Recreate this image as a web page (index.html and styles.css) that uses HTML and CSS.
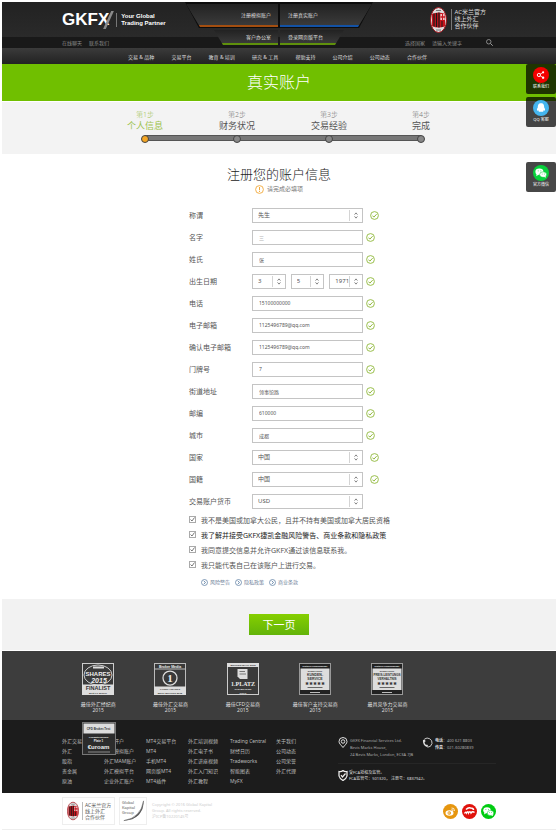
FILE: index.html
```html
<!DOCTYPE html>
<html lang="zh-CN">
<head>
    <meta charset="UTF-8">
    <meta name="viewport" content="width=device-width, initial-scale=1.0">
    <title>GKFX 真实账户</title>
    <link rel="stylesheet" href="styles.css">
</head>
<body>
    <svg width="0" height="0" class="defs" aria-hidden="true">
        <symbol id="ok" viewBox="0 0 18 18">
            <circle cx="9" cy="9" r="7.8" fill="none" stroke="#8fb83a" stroke-width="1.8"/>
            <path d="M4.8 9.2l3 3 5.4-5.8" fill="none" stroke="#8fb83a" stroke-width="2"/>
        </symbol>
        <symbol id="updown" viewBox="0 0 8 12">
            <path d="M1.5 4.5L4 1.5l2.5 3M1.5 7.5l2.5 3 2.5-3" fill="none" stroke="#777" stroke-width="1.5"/>
        </symbol>
        <symbol id="play" viewBox="0 0 14 14">
            <circle cx="7" cy="7" r="6" fill="none" stroke="#5d7fa3" stroke-width="1.5"/>
            <path d="M5.5 3.8L9 7l-3.5 3.2" fill="none" stroke="#5d7fa3" stroke-width="1.8"/>
        </symbol>
        <symbol id="milan" viewBox="0 0 34 52">
            <ellipse cx="17" cy="26" rx="16" ry="25" fill="#ddd" stroke="#a5141c" stroke-width="2"/>
            <path d="M4 14q13-6 26 0v24q-13 6-26 0z" fill="#c8141d"/>
            <path d="M8 13v26M13 12v28M18 11v30" stroke="#1a1a1a" stroke-width="2.4"/>
            <path d="M21 14h8v12h-8z" fill="#fff"/>
            <path d="M25 13v14M21 20h9" stroke="#c8141d" stroke-width="3"/>
            <path d="M21 27h8v12l-8 1z" fill="#c8141d"/>
            <path d="M24 28v12" stroke="#1a1a1a" stroke-width="2"/>
            <path d="M12 7h10M12 46h10" stroke="#777" stroke-width="2"/>
        </symbol>
        <symbol id="wechat" viewBox="0 0 30 30">
            <ellipse cx="12" cy="12.500" rx="7.500" ry="6" fill="#fff"/>
            <path d="M7 16l-1 5 5-3z" fill="#fff"/>
            <ellipse cx="19" cy="18" rx="6.500" ry="5.200" fill="#fff" stroke="#0c3" stroke-width="1"/>
            <path d="M20 22l4 2-.5-4z" fill="#fff"/>
            <path d="M9 11h1.500M14 11h1.500M16.500 17h1.300M20.500 17h1.300" stroke="#0c3" stroke-width="1.500"/>
        </symbol>
    </svg>

    <header class="header">
        <div class="topbar">
            <div class="container topbar-inner">
                <a class="logo" href="#">
                    <span class="logo-name">GKFX</span>
                    <svg class="logo-slash" viewBox="0 0 12 20"><path d="M0 20L9 0h3L3 20z" fill="#8a8a8a"/></svg>
                    <span class="logo-tag">Your Global<br>Trading Partner</span>
                </a>
                <a class="partner" href="#">
                    <svg class="crest"><use href="#milan"/></svg>
                    <span class="partner-text">AC米兰官方<br>线上外汇<br>合作伙伴</span>
                </a>
            </div>
        </div>
        <div class="utility">
            <div class="container utility-inner">
                <a href="#">在线聊天</a>
                <a href="#">联系我们</a>
                <a class="country" href="#">选择国家</a>
                <form class="search">
                    <input type="text" placeholder="请输入关键字" aria-label="请输入关键字">
                    <button type="button" aria-label="搜索">
                        <svg viewBox="0 0 14 14"><circle cx="5.500" cy="5.500" r="4.500" fill="none" stroke="#aaa" stroke-width="1.500"/><path d="M9 9l4.500 4.500" stroke="#aaa" stroke-width="1.800"/></svg>
                    </button>
                </form>
            </div>
        </div>
        <div class="tabs">
            <div class="tabs-main">
                <a class="tab tab-demo" href="#">注册模拟账户</a>
                <a class="tab tab-live" href="#">注册真实账户</a>
            </div>
            <div class="tabs-sub">
                <a class="tab tab-office" href="#">客户办公室</a>
                <a class="tab tab-web" href="#">登录网页版平台</a>
            </div>
        </div>
        <nav class="nav">
            <div class="container nav-inner">
                <a href="#">交易 &amp; 品种</a>
                <a href="#">交易平台</a>
                <a href="#">教育 &amp; 培训</a>
                <a href="#">研究 &amp; 工具</a>
                <a href="#">帮助支持</a>
                <a href="#">公司介绍</a>
                <a href="#">公司动态</a>
                <a href="#">合作伙伴</a>
            </div>
        </nav>
    </header>

    <h1 class="banner">真实账户</h1>

    <section class="progress">
        <div class="container">
            <ol class="steps">
                <li class="active"><small>第1步</small><span>个人信息</span><i></i></li>
                <li><small>第2步</small><span>财务状况</span><i></i></li>
                <li><small>第3步</small><span>交易经验</span><i></i></li>
                <li><small>第4步</small><span>完成</span><i></i></li>
            </ol>
        </div>
    </section>

    <form class="account">
        <div class="container">
            <h2>注册您的账户信息</h2>
            <p class="hint">
                <svg viewBox="0 0 18 18"><circle cx="9" cy="9" r="7.800" fill="none" stroke="#f2a93b" stroke-width="1.800"/><path d="M9 4v6.500M9 12v2" stroke="#f2a93b" stroke-width="2"/></svg>
                请完成必填项
            </p>
            <div class="fields">
                <div class="row row-select">
                    <label for="title">称谓</label>
                    <div class="select"><select id="title"><option>先生</option></select><svg><use href="#updown"/></svg></div>
                    <svg class="ok"><use href="#ok"/></svg>
                </div>
                <div class="row">
                    <label for="first">名字</label>
                    <input type="text" id="first" value="三">
                    <svg class="ok"><use href="#ok"/></svg>
                </div>
                <div class="row">
                    <label for="last">姓氏</label>
                    <input type="text" id="last" value="张">
                    <svg class="ok"><use href="#ok"/></svg>
                </div>
                <div class="row">
                    <label for="day">出生日期</label>
                    <div class="birth">
                        <div class="select"><select id="day"><option>3</option></select><svg><use href="#updown"/></svg></div>
                        <div class="select"><select aria-label="月"><option>5</option></select><svg><use href="#updown"/></svg></div>
                        <div class="select"><select aria-label="年"><option>1971</option></select><svg><use href="#updown"/></svg></div>
                    </div>
                    <svg class="ok"><use href="#ok"/></svg>
                </div>
                <div class="row">
                    <label for="phone">电话</label>
                    <input type="tel" id="phone" value="15100000000">
                    <svg class="ok"><use href="#ok"/></svg>
                </div>
                <div class="row">
                    <label for="email">电子邮箱</label>
                    <input type="email" id="email" value="1125496789@qq.com">
                    <svg class="ok"><use href="#ok"/></svg>
                </div>
                <div class="row">
                    <label for="email2">确认电子邮箱</label>
                    <input type="email" id="email2" value="1125496789@qq.com">
                    <svg class="ok"><use href="#ok"/></svg>
                </div>
                <div class="row">
                    <label for="house">门牌号</label>
                    <input type="text" id="house" value="7">
                    <svg class="ok"><use href="#ok"/></svg>
                </div>
                <div class="row">
                    <label for="street">街道地址</label>
                    <input type="text" id="street" value="领事馆路">
                    <svg class="ok"><use href="#ok"/></svg>
                </div>
                <div class="row">
                    <label for="zip">邮编</label>
                    <input type="text" id="zip" value="610000">
                    <svg class="ok"><use href="#ok"/></svg>
                </div>
                <div class="row">
                    <label for="city">城市</label>
                    <input type="text" id="city" value="成都">
                    <svg class="ok"><use href="#ok"/></svg>
                </div>
                <div class="row row-select">
                    <label for="country">国家</label>
                    <div class="select"><select id="country"><option>中国</option></select><svg><use href="#updown"/></svg></div>
                    <svg class="ok"><use href="#ok"/></svg>
                </div>
                <div class="row row-select">
                    <label for="nation">国籍</label>
                    <div class="select"><select id="nation"><option>中国</option></select><svg><use href="#updown"/></svg></div>
                    <svg class="ok"><use href="#ok"/></svg>
                </div>
                <div class="row row-select">
                    <label for="currency">交易账户货币</label>
                    <div class="select"><select id="currency"><option>USD</option></select><svg><use href="#updown"/></svg></div>
                </div>
                <div class="agree">
                    <label><input type="checkbox" checked>我不是美国或加拿大公民，且并不持有美国或加拿大居民资格</label>
                    <label class="strong"><input type="checkbox" checked>我了解并接受GKFX捷凯金融风险警告、商业条款和隐私政策</label>
                    <label><input type="checkbox" checked>我同意提交信息并允许GKFX通过该信息联系我。</label>
                    <label><input type="checkbox" checked>我只能代表自己在该账户上进行交易。</label>
                </div>
                <div class="legal">
                    <a href="#"><svg><use href="#play"/></svg>风险警告</a>
                    <a href="#"><svg><use href="#play"/></svg>隐私政策</a>
                    <a href="#"><svg><use href="#play"/></svg>商业条款</a>
                </div>
            </div>
        </div>
        <div class="submit">
            <button type="button">下一页</button>
        </div>
    </form>

    <section class="awards">
        <div class="container awards-grid">
            <figure>
                <svg viewBox="0 0 64 64" class="badge">
                    <rect x="1" y="1" width="62" height="62" fill="#3a3a3a" stroke="#ccc" stroke-width="2"/>
                    <ellipse cx="32" cy="24" rx="28" ry="20" fill="none" stroke="#ccc" stroke-width="2"/>
                    <rect x="22" y="7" width="22" height="4" fill="#ddd"/>
                    <text x="32" y="25" class="b-text" font-size="12">SHARES</text>
                    <text x="34" y="40" class="b-text" font-size="14" font-style="italic">2015</text>
                    <rect y="43" width="64" height="21" fill="#ddd"/>
                    <text x="32" y="54" class="b-dark" font-size="11">FINALIST</text>
                    <text x="32" y="61" class="b-dark" font-size="5">Best FX Broker</text>
                </svg>
                <figcaption>最佳外汇经纪商<br>2015</figcaption>
            </figure>
            <figure>
                <svg viewBox="0 0 64 64" class="badge">
                    <rect x="1" y="1" width="62" height="62" fill="#3a3a3a" stroke="#bbb" stroke-width="2"/>
                    <text x="32" y="9" class="b-text" font-size="7">Broker Media</text>
                    <path d="M2 12h60" stroke="#bbb" stroke-width="2"/>
                    <circle cx="32" cy="30" r="14" fill="none" stroke="#ddd" stroke-width="2.500"/>
                    <text x="32" y="38" class="b-text b-serif" font-size="22">1</text>
                    <rect y="47" width="64" height="17" fill="#ddd"/>
                    <text x="32" y="54" class="b-dark" font-size="5">FOREX AWARDS</text>
                    <text x="32" y="61" class="b-dark" font-size="5">BEST BROKER 2015</text>
                </svg>
                <figcaption>最佳外汇交易商<br>2015</figcaption>
            </figure>
            <figure>
                <svg viewBox="0 0 64 64" class="badge">
                    <rect x="1" y="1" width="62" height="62" fill="#3a3a3a" stroke="#ccc" stroke-width="2"/>
                    <rect width="64" height="8" fill="#ddd"/>
                    <text x="32" y="6" class="b-dark" font-size="5">BROKER-WAHL 2015</text>
                    <path d="M21 12h20v20H26l-5-5z" fill="#ddd"/>
                    <path d="M25 17h11M25 22h13" stroke="#777" stroke-width="2"/>
                    <text x="32" y="45" class="b-text b-serif" font-size="12">1.PLATZ</text>
                    <text x="32" y="53" class="b-text" font-size="5">CFD-BROKER</text>
                    <text x="32" y="61" class="b-text" font-size="5">GKFX</text>
                </svg>
                <figcaption>最佳CFD交易商<br>2015</figcaption>
            </figure>
            <figure>
                <svg viewBox="0 0 64 64" class="badge">
                    <rect x="1" y="1" width="62" height="62" fill="#222" stroke="#999" stroke-width="2"/>
                    <text x="32" y="8" class="b-text" font-size="4">Deutsche Kundenumfrage</text>
                    <rect x="3" y="11" width="58" height="43" fill="#ddd"/>
                    <text x="32" y="18" class="b-dark" font-size="5">EXZELLENT</text>
                    <text x="32" y="26" class="b-dark" font-size="7">KUNDEN-</text>
                    <text x="32" y="34" class="b-dark" font-size="7">SERVICE</text>
                    <text x="32" y="44" class="b-dark" font-size="8">★★★★★</text>
                    <path d="M17 49h30" stroke="#666" stroke-width="2"/>
                    <path d="M22 59h20" stroke="#bbb" stroke-width="2"/>
                </svg>
                <figcaption>最佳客户支持交易商<br>2015</figcaption>
            </figure>
            <figure>
                <svg viewBox="0 0 64 64" class="badge">
                    <rect x="1" y="1" width="62" height="62" fill="#222" stroke="#999" stroke-width="2"/>
                    <text x="32" y="8" class="b-text" font-size="4">Deutsche Kundenumfrage</text>
                    <rect x="3" y="11" width="58" height="43" fill="#ddd"/>
                    <text x="32" y="18" class="b-dark" font-size="5">EXZELLENT</text>
                    <text x="32" y="26" class="b-dark" font-size="6">PREIS-LEISTUNGS</text>
                    <text x="32" y="34" class="b-dark" font-size="6">VERHÄLTNIS</text>
                    <text x="32" y="44" class="b-dark" font-size="8">★★★★★</text>
                    <path d="M17 49h30" stroke="#666" stroke-width="2"/>
                    <path d="M22 59h20" stroke="#bbb" stroke-width="2"/>
                </svg>
                <figcaption>最具竞争力交易商<br>2015</figcaption>
            </figure>
            <svg viewBox="0 0 68 66" class="badge-last">
                <rect x="1" y="1" width="66" height="64" fill="#2c2c2c" stroke="#777" stroke-width="2"/>
                <rect x="3" y="3" width="62" height="20" fill="#ddd"/>
                <text x="33" y="15" class="b-dark" font-size="6">CFD Broker-Test</text>
                <text x="33" y="32" class="b-text" font-size="5">Gesamtergebnis</text>
                <text x="33" y="40" class="b-text" font-size="6">Platz 1</text>
                <text x="33" y="54" class="b-text" font-size="12">€uroam</text>
                <path d="M12 60h44" stroke="#888" stroke-width="2"/>
            </svg>
        </div>
    </section>

    <footer>
        <div class="footer">
            <div class="container footer-inner">
                <ul class="c1"><li><a href="#">外汇交易</a></li><li><a href="#">外汇</a></li><li><a href="#">股指</a></li><li><a href="#">贵金属</a></li><li><a href="#">原油</a></li></ul>
                <ul class="c1"><li><a href="#">外汇开户</a></li><li><a href="#">外汇模拟账户</a></li><li><a href="#">外汇MAM账户</a></li><li><a href="#">外汇模拟平台</a></li><li><a href="#">企业外汇账户</a></li></ul>
                <ul class="c1"><li><a href="#">MT4交易平台</a></li><li><a href="#">MT4</a></li><li><a href="#">手机MT4</a></li><li><a href="#">网页版MT4</a></li><li><a href="#">MT4插件</a></li></ul>
                <ul class="c1"><li><a href="#">外汇培训视频</a></li><li><a href="#">外汇电子书</a></li><li><a href="#">外汇讲座视频</a></li><li><a href="#">外汇入门知识</a></li><li><a href="#">外汇教程</a></li></ul>
                <ul class="c2"><li><a href="#">Trading Central</a></li><li><a href="#">财经日历</a></li><li><a href="#">Tradeworks</a></li><li><a href="#">智能图表</a></li><li><a href="#">MyFX</a></li></ul>
                <ul><li><a href="#">关于我们</a></li><li><a href="#">公司动态</a></li><li><a href="#">公司荣誉</a></li><li><a href="#">外汇代理</a></li></ul>
                <div class="contact">
                    <div class="contact-top">
                        <svg viewBox="0 0 20 22" class="pin"><path d="M10 21C6 16 2 13 2 9a8 8 0 0116 0c0 4-4 7-8 12z" fill="none" stroke="#ddd" stroke-width="2"/><circle cx="10" cy="9" r="3.500" fill="none" stroke="#ddd" stroke-width="2"/></svg>
                        <address>GKFX Financial Services Ltd.<br>Bevis Marks House,<br>24 Bevis Marks, London, EC3A 7JB</address>
                        <svg viewBox="0 0 22 22" class="tel"><path d="M5 4a9.500 9.500 0 0115 9M20 13a9.500 9.500 0 01-9 7.500" fill="none" stroke="#ddd" stroke-width="1.800"/><path d="M2 6c-1 7 3 13 9 14l1-3-2-2-2 1c-2-2-3-4-3-6l2-1-1-4z" fill="#ddd"/></svg>
                        <p><b>电话</b>：400 621 8803<br><b>传真</b>：021-60280839</p>
                    </div>
                    <div class="contact-fca">
                        <svg viewBox="0 0 20 22" class="pin"><path d="M2 3q5 1 8-2 3 3 8 2v9q-1 5-8 9-7-4-8-9z" fill="none" stroke="#eee" stroke-width="2.500"/><path d="M6 10l3 4 6-7" fill="none" stroke="#eee" stroke-width="2.500"/></svg>
                        <p>受FCA授权及监管。<br>FCA监管号：501320， 注册号：6837942。</p>
                    </div>
                </div>
            </div>
        </div>
        <div class="bottom">
            <div class="container bottom-inner">
                <div class="box box-milan">
                    <svg class="crest-small"><use href="#milan"/></svg>
                    <span>AC米兰官方<br>线上外汇<br>合作伙伴</span>
                </div>
                <div class="box box-group">
                    <span>Global<br>Kapital<br>Group</span>
                    <svg viewBox="0 0 54 54"><path d="M49 6Q48 44 8 47 43 41 49 6z" fill="#555" stroke="#555"/></svg>
                </div>
                <p class="copy">Copyright © 2016 Global Kapital<br>Group. All rights reserved.<br>沪ICP备10220145号</p>
                <div class="social">
                    <a href="#" aria-label="微博"><svg viewBox="0 0 30 30"><circle cx="15" cy="15" r="15" fill="#e6960f"/><ellipse cx="13" cy="18" rx="8" ry="5.500" fill="#fff"/><circle cx="12.500" cy="18" r="3.500" fill="#e6960f"/><circle cx="12" cy="18" r="1.500" fill="#fff"/><path d="M17 8q6-1 6 6M17 11q3 0 3 3" fill="none" stroke="#fff" stroke-width="1.600"/></svg></a>
                    <a href="#" aria-label="人人"><svg viewBox="0 0 30 30"><circle cx="15" cy="15" r="15" fill="#e0120c"/><path d="M8 11q5-5 9-3 6 0 6 4" fill="none" stroke="#fff" stroke-width="3"/><path d="M5 19q3-5 4-1 3-5 4 0 3-5 5 0 3-4 7-1" fill="none" stroke="#fff" stroke-width="2.800"/></svg></a>
                    <a href="#" aria-label="微信"><svg viewBox="0 0 30 30"><circle cx="15" cy="15" r="15" fill="#0c1"/><use href="#wechat"/></svg></a>
                </div>
            </div>
        </div>
    </footer>

    <aside class="side">
        <a href="#"><svg viewBox="0 0 30 30"><circle cx="15" cy="15" r="15" fill="#f40000"/><path d="M19 10l-8 5 8 5" fill="none" stroke="#fff" stroke-width="1.500"/><circle cx="11" cy="15" r="3" fill="#f40000" stroke="#fff" stroke-width="1.800"/><circle cx="19" cy="10" r="2" fill="#fff"/><circle cx="19" cy="20" r="2.200" fill="#fff"/></svg>联系我们</a>
        <a href="#"><svg viewBox="0 0 30 30"><circle cx="15" cy="15" r="15" fill="#45b5ee"/><path d="M15 6c5 0 6 4 6 8 2 3 2 5 1 6l-2-1-1 3h-8l-1-3-2 1c-1-1-1-3 1-6 0-4 1-8 6-8z" fill="#fff"/></svg>QQ 客服</a>
        <a href="#" class="side-last"><svg viewBox="0 0 30 30"><circle cx="15" cy="15" r="15" fill="#08d13c"/><use href="#wechat"/></svg>官方微信</a>
    </aside>
</body>
</html>
```
FILE: styles.css
```css
* {
    box-sizing: border-box;
}
body {
    margin: 2px;
    position: relative;
    font-family: "Noto Sans", "Noto Sans CJK SC", sans-serif;
    font-size: 5px;
    color: #555;
    background: #fff;
}
h1, h2, p, ol, ul, figure {
    margin: 0;
    padding: 0;
    font-weight: normal;
}
ol, ul {
    list-style: none;
}
a {
    color: inherit;
    text-decoration: none;
}
svg {
    display: block;
    flex: none;
}
input, select, button {
    margin: 0;
    padding: 0;
    border: 0;
    font: inherit;
    color: inherit;
    background: none;
}
.defs {
    position: absolute;
}
.container {
    max-width: 434px;
    margin: 0 auto;
}

/* header */
.header {
    position: relative;
    color: #ccc;
}
.topbar {
    background: linear-gradient(#222, #2a2a2a);
}
.topbar-inner {
    height: 35px;
    display: flex;
    justify-content: space-between;
    align-items: center;
}
.logo {
    display: flex;
    align-items: center;
    color: #fff;
    font-family: "Liberation Sans", sans-serif;
    font-weight: bold;
}
.logo-name {
    font-size: 17px;
    line-height: 20px;
}
.logo-slash {
    width: 11px;
    height: 18px;
    margin-left: -6px;
}
.logo-tag {
    margin-left: 2px;
    padding-left: 4px;
    border-left: 1px solid #777;
    font-size: 6px;
    line-height: 7px;
}
.partner {
    display: flex;
    align-items: center;
    margin-right: 10px;
    color: #ddd;
}
.crest {
    width: 17px;
    height: 26px;
}
.partner-text {
    margin-left: 4px;
    padding-left: 2px;
    border-left: 1px solid #777;
    font-size: 6px;
    line-height: 7px;
}
.utility {
    background: #191919;
    color: #888;
}
.utility-inner {
    height: 11px;
    display: flex;
    align-items: center;
    gap: 7px;
}
.country {
    margin-left: auto;
}
.search {
    display: flex;
    align-items: center;
    width: 64px;
    height: 9px;
}
.search input {
    width: 54px;
    height: 9px;
}
.search input::placeholder {
    color: #888;
    opacity: 1;
}
.search svg {
    width: 7px;
    height: 7px;
}
.tabs {
    position: absolute;
    top: 0;
    left: 50%;
    width: 188px;
    margin-left: -94px;
    line-height: 12px;
}
.tabs-main {
    display: flex;
    justify-content: center;
    gap: 2px;
    height: 26px;
    padding: 2px 0 1px;
    background: #0c0c0c;
    clip-path: polygon(0 0, 100% 0, 174px 100%, 14px 100%);
}
.tabs-sub {
    display: flex;
    justify-content: center;
    gap: 2px;
    padding-top: 2px;
}
.tab {
    color: #ddd;
    background: linear-gradient(#222, #3a3a3a);
}
.tab-demo {
    width: 92px;
    padding: 5px 7px 0 0;
    text-align: right;
    border-bottom: 2px solid #a34e10;
    clip-path: polygon(0 0, 100% 0, 100% 100%, 14px 100%);
}
.tab-live {
    width: 92px;
    padding: 5px 0 0 8px;
    border-bottom: 2px solid #1352a5;
    clip-path: polygon(0 0, 100% 0, 78px 100%, 0 100%);
}
.tab-office {
    width: 64px;
    padding: 1px 7px 0 0;
    text-align: right;
    border-bottom: 2px solid #5f900c;
    clip-path: polygon(0 0, 100% 0, 100% 100%, 9px 100%);
}
.tab-web {
    width: 64px;
    padding: 1px 0 0 8px;
    border-bottom: 2px solid #5f900c;
    clip-path: polygon(0 0, 100% 0, 55px 100%, 0 100%);
}
.nav {
    background: linear-gradient(#3b3b3b, #222);
    color: #ddd;
}
.nav-inner {
    height: 16px;
    display: flex;
    justify-content: space-between;
    align-items: center;
    padding: 0 69px 0 66px;
}

/* banner and steps */
.banner {
    background: #70bf00;
    color: #fff;
    font-size: 16px;
    font-weight: 300;
    line-height: 37px;
    text-align: center;
}
.progress {
    margin-top: 1px;
    padding: 8px 0 11px;
    background: #f3f3f3;
}
.steps {
    position: relative;
    display: flex;
    justify-content: space-between;
    width: 336px;
    margin-left: 53px;
}
.steps::before {
    content: "";
    position: absolute;
    left: 30px;
    right: 30px;
    bottom: 2px;
    height: 4px;
    background: #777;
    border: 1px solid #555;
}
.steps li {
    position: relative;
    width: 60px;
    display: flex;
    flex-direction: column;
    align-items: center;
}
.steps small {
    font-size: 7px;
    font-weight: 300;
    line-height: 10px;
    color: #777;
}
.steps span {
    font-size: 9px;
    line-height: 11px;
}
.steps i {
    width: 8px;
    height: 8px;
    margin-top: 4px;
    border: 1px solid #444;
    border-radius: 50%;
    background: #888;
}
.steps .active small,
.steps .active span {
    color: #9cc24d;
}
.steps .active i {
    background: #f5a623;
}

/* account form */
.account h2 {
    padding-top: 11px;
    font-size: 13px;
    font-weight: 300;
    line-height: 18px;
    text-align: center;
    color: #222;
}
.hint {
    display: flex;
    justify-content: center;
    align-items: center;
    gap: 3px;
    font-size: 6px;
    line-height: 12px;
    color: #777;
}
.hint svg,
.ok {
    width: 9px;
    height: 9px;
}
.fields {
    padding: 9px 0 13px 127px;
}
.row {
    display: flex;
    align-items: center;
    height: 22px;
}
.row label {
    width: 63px;
    font-size: 7px;
}
.row > input,
.row > .select,
.birth {
    width: 111px;
    height: 15px;
}
.row > input,
.select select {
    border: 1px solid #c4c4c4;
    background: #fff;
}
.row > input {
    padding-left: 6px;
}
.ok {
    margin-left: 3px;
}
.row-select .ok {
    margin-left: 7px;
}
.birth {
    display: flex;
    gap: 5px;
}
.select {
    position: relative;
    flex: none;
}
.birth .select {
    flex: 1;
}
.select select {
    width: 100%;
    height: 15px;
    padding-left: 5px;
    font-size: 6px;
    appearance: none;
}
.select svg {
    position: absolute;
    top: 2px;
    right: 1px;
    width: 13px;
    height: 11px;
    padding: 2px 0;
    border-left: 1px solid #d4d4d4;
    pointer-events: none;
}
.agree {
    display: flex;
    flex-direction: column;
    white-space: nowrap;
}
.agree label {
    display: flex;
    align-items: center;
    height: 15px;
    font-size: 7px;
}
.agree .strong {
    color: #222;
}
.agree input {
    width: 7px;
    height: 7px;
    margin-right: 5px;
    border: 1px solid #aaa;
    appearance: none;
    background: url("data:image/svg+xml,%3Csvg xmlns='http://www.w3.org/2000/svg' viewBox='0 0 10 10'%3E%3Cpath d='M1 5l3 3 5-7' fill='none' stroke='%23555' stroke-width='1.6'/%3E%3C/svg%3E");
}
.legal {
    display: flex;
    gap: 5px;
    padding: 6px 0 0 12px;
    line-height: 8px;
    color: #71839a;
}
.legal a {
    display: flex;
    align-items: center;
    gap: 2px;
}
.legal svg {
    width: 7px;
    height: 7px;
}
.submit {
    display: flex;
    justify-content: center;
    padding: 15px 0;
    background: #f2f2f2;
}
.submit button {
    width: 60px;
    height: 21px;
    font-size: 11px;
    line-height: 21px;
    color: #fff;
    background: linear-gradient(#86cf00, #62b30a);
}

/* awards */
.awards {
    border-top: 1px solid #fff;
    background: #3d3d3d;
    color: #ddd;
}
.awards-grid {
    position: relative;
    display: grid;
    grid-template-columns: repeat(6, 1fr);
    padding: 12px 0 7px;
}
.awards figure {
    display: flex;
    flex-direction: column;
    align-items: center;
    gap: 6px;
    line-height: 6px;
    text-align: center;
    white-space: nowrap;
}
.badge {
    width: 32px;
    height: 32px;
}
.badge-last {
    position: absolute;
    top: 71px;
    left: 20px;
    width: 34px;
    height: 33px;
}
.b-text,
.b-dark {
    font-family: "Liberation Sans", sans-serif;
    font-weight: bold;
    text-anchor: middle;
    fill: #eee;
}
.b-serif {
    font-family: "Liberation Serif", serif;
}
.b-dark {
    fill: #333;
}

/* footer */
.footer {
    background: #1c1c1c;
    color: #bbb;
}
.footer-inner {
    display: flex;
    padding: 16px 0 7px;
    line-height: 10px;
    white-space: nowrap;
}
.footer ul {
    width: 62px;
}
.footer .c1 {
    width: 42px;
}
.footer .c2 {
    width: 46px;
}
.contact {
    flex: 1;
    font-size: 4px;
    color: #aaa;
}
.contact-top {
    display: flex;
    align-items: flex-start;
    gap: 2px;
    padding: 1px 0 5px;
    border-bottom: 1px solid #262626;
    line-height: 7px;
}
.contact address {
    width: 70px;
    font-style: normal;
}
.contact b {
    color: #ddd;
}
.pin {
    width: 10px;
    height: 11px;
}
.tel {
    width: 11px;
    height: 11px;
}
.contact-fca {
    display: flex;
    gap: 1px;
    padding-top: 6px;
    line-height: 6px;
    color: #ddd;
}
.bottom {
    border-bottom: 1px solid #eee;
}
.bottom-inner {
    display: flex;
    align-items: center;
    padding: 4px 0;
    gap: 4px;
}
.box {
    height: 28px;
    border: 1px solid #eee;
    display: flex;
    align-items: center;
}
.box-milan {
    width: 53px;
    gap: 3px;
    padding-left: 4px;
    line-height: 6px;
    white-space: nowrap;
}
.box-milan span {
    padding-left: 2px;
    border-left: 1px solid #bbb;
}
.crest-small {
    width: 12px;
    height: 20px;
}
.box-group {
    position: relative;
    width: 28px;
    padding: 0 0 8px 2px;
    font-size: 4px;
    line-height: 5px;
}
.box-group svg {
    position: absolute;
    inset: 0;
}
.copy {
    margin-left: 1px;
    font-size: 4px;
    line-height: 6px;
    color: #ccc;
}
.social {
    display: flex;
    gap: 4px;
    margin-left: auto;
}
.social svg {
    width: 15px;
    height: 15px;
}

/* floating contact buttons */
.side {
    position: absolute;
    top: 62px;
    right: 0;
    display: flex;
    flex-direction: column;
    gap: 3px;
}
.side a {
    display: flex;
    flex-direction: column;
    align-items: center;
    width: 30px;
    height: 30px;
    padding-top: 3px;
    border-radius: 2px;
    background: rgba(0, 0, 0, 0.72);
    color: #fff;
    font-size: 4px;
    line-height: 8px;
}
.side svg {
    width: 16px;
    height: 16px;
}
.side .side-last {
    margin-top: 32px;
}
```
